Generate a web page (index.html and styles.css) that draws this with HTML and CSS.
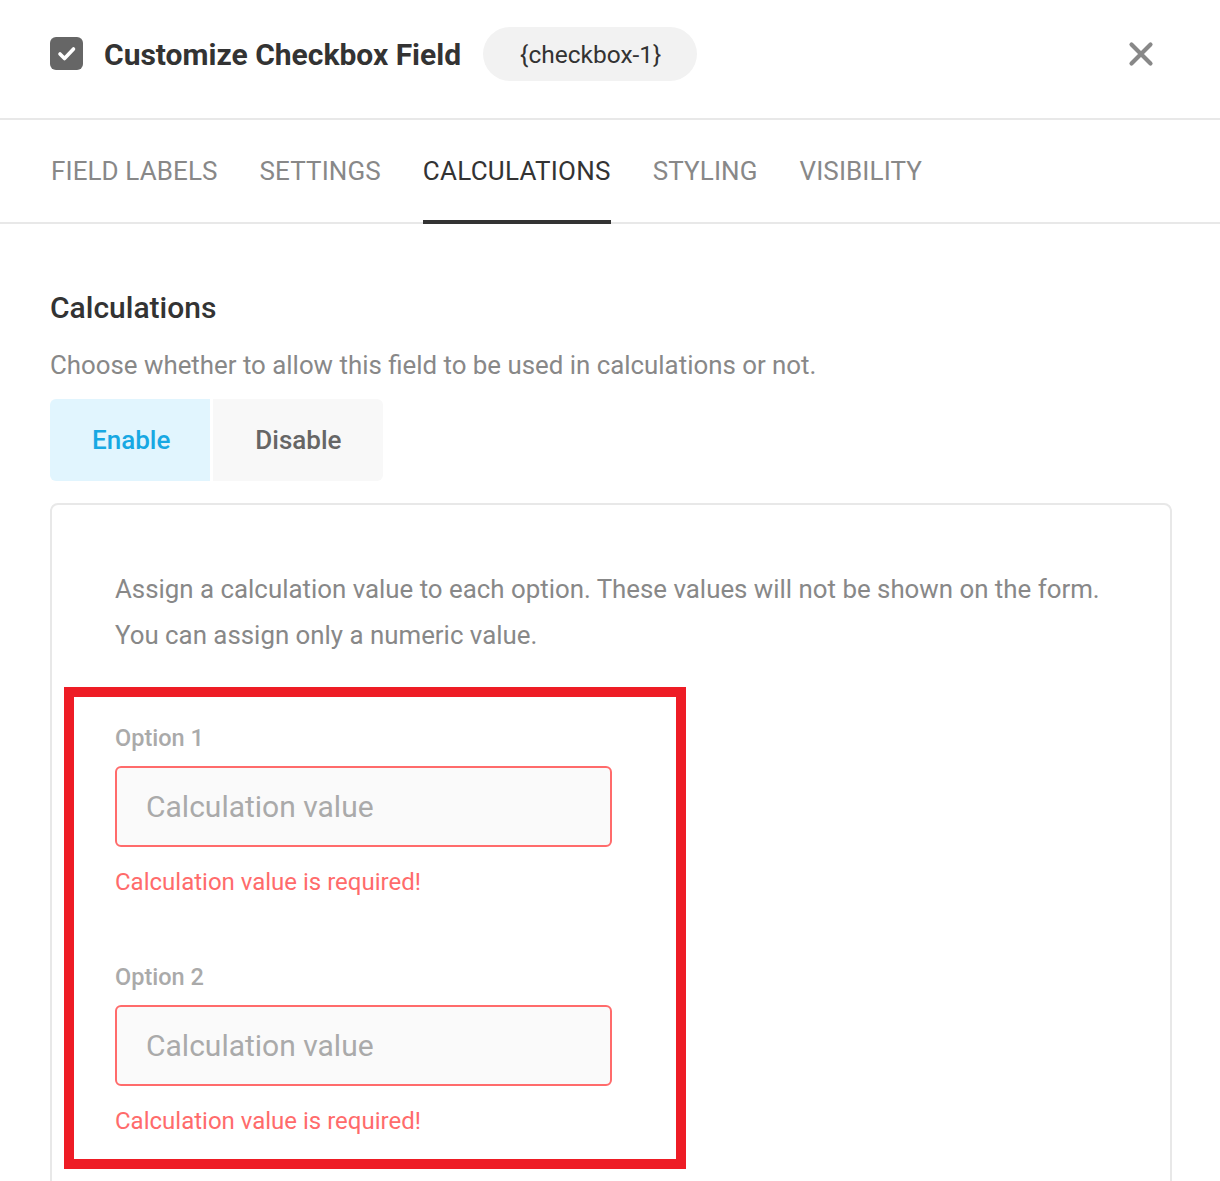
FILE: index.html
```html
<!DOCTYPE html>
<html lang="en">
<head>
<meta charset="utf-8">
<title>Customize Checkbox Field</title>
<link rel="stylesheet" href="styles.css">
</head>
<body>
<div class="modal">
  <header class="header">
    <span class="field-icon">
      <svg width="33" height="33" viewBox="0 0 33 33"><rect x="0" y="0" width="33" height="33" rx="6" fill="#666"/><path d="M10 17 L14.5 21.5 L23.5 12" fill="none" stroke="#fff" stroke-width="3.6" stroke-linecap="round" stroke-linejoin="round"/></svg>
    </span>
    <h1 class="title">Customize Checkbox Field</h1>
    <span class="tag">{checkbox-1}</span>
    <button class="close" aria-label="Close">
      <svg width="26" height="26" viewBox="0 0 26 26"><path d="M3.5 3.5 L22.5 22.5 M22.5 3.5 L3.5 22.5" stroke="#888" stroke-width="4.2" stroke-linecap="round"/></svg>
    </button>
  </header>
  <nav class="tabs">
    <span class="tab">FIELD LABELS</span>
    <span class="tab">SETTINGS</span>
    <span class="tab active">CALCULATIONS</span>
    <span class="tab">STYLING</span>
    <span class="tab">VISIBILITY</span>
  </nav>
  <main class="content">
    <h2 class="heading">Calculations</h2>
    <p class="desc">Choose whether to allow this field to be used in calculations or not.</p>
    <div class="toggle">
      <span class="toggle-btn on">Enable</span>
      <span class="toggle-btn off">Disable</span>
    </div>
    <section class="box">
      <p class="box-text">Assign a calculation value to each option. These values will not be shown on the form.<br>You can assign only a numeric value.</p>
      <div class="option">
        <label class="opt-label">Option 1</label>
        <input class="opt-input" type="text" placeholder="Calculation value">
        <div class="opt-error">Calculation value is required!</div>
      </div>
      <div class="option">
        <label class="opt-label">Option 2</label>
        <input class="opt-input" type="text" placeholder="Calculation value">
        <div class="opt-error">Calculation value is required!</div>
      </div>
    </section>
  </main>
  <div class="highlight"></div>
</div>
</body>
</html>
```
FILE: styles.css
```css
* { box-sizing: border-box; }
html, body { margin: 0; padding: 0; background: #fff; }
body {
  font-family: Roboto, "Liberation Sans", Arial, sans-serif;
  color: #333;
  overflow: hidden;
  height: 1181px;
}
.modal { position: relative; }

.header {
  display: flex;
  align-items: center;
  height: 120px;
  padding: 0 66px 10px 50px;
  border-bottom: 2px solid #e8e8e8;
}
.field-icon { display: flex; width: 33px; height: 33px; margin-top: -2px; }
.title {
  margin: 0 0 0 21px;
  font-size: 30px;
  font-weight: 700;
  color: #333;
  white-space: nowrap;
}
.tag {
  margin-left: 22px;
  height: 54px;
  padding: 0 36px 0 37px;
  border-radius: 27px;
  background: #f2f2f2;
  display: flex;
  align-items: center;
  font-size: 24.5px;
  color: #333;
}
.close {
  margin-left: auto;
  border: 0;
  background: none;
  padding: 0;
  display: flex;
  cursor: pointer;
}

.tabs {
  display: flex;
  gap: 42px;
  height: 104px;
  padding-left: 51px;
  border-bottom: 2px solid #e8e8e8;
}
.tab {
  display: flex;
  align-items: center;
  font-size: 26px;
  letter-spacing: 0.1px;
  color: #888;
  border-bottom: 4px solid transparent;
  margin-bottom: -2px;
  padding-top: 2px;
}
.tab.active { color: #333; border-bottom-color: #333; letter-spacing: 0.25px; }

.content { padding: 0 48px 0 50px; }
.heading {
  margin: 66px 0 0;
  font-size: 30px;
  line-height: 36px;
  font-weight: 500;
  color: #333;
}
.desc {
  margin: 23px 0 0;
  font-size: 25.85px;
  line-height: 32px;
  color: #888;
}
.toggle { display: flex; gap: 3px; margin-top: 18px; }
.toggle-btn {
  height: 82px;
  display: flex;
  align-items: center;
  font-size: 26px;
  font-weight: 500;
}
.toggle-btn.on {
  padding: 0 40px 0 42px;
  background: #e1f5fe;
  color: #17a8e3;
  border-radius: 6px 0 0 6px;
}
.toggle-btn.off {
  padding: 0 41px 0 42px;
  background: #f8f8f8;
  color: #666;
  border-radius: 0 6px 6px 0;
}

.box {
  margin-top: 22px;
  border: 2px solid #e8e8e8;
  border-radius: 8px;
  padding: 61px 40px 120px 63px;
}
.box-text {
  margin: 0;
  font-size: 25.85px;
  line-height: 46px;
  color: #888;
}
.option { display: flex; flex-direction: column; align-items: flex-start; }
.opt-label {
  margin-top: 65px;
  font-size: 23.5px;
  line-height: 30px;
  font-weight: 500;
  color: #aaa;
}
.opt-input {
  margin-top: 13px;
  width: 497px;
  height: 81px;
  border: 2px solid #ff6b6b;
  border-radius: 6px;
  background: #fafafa;
  padding: 0 20px 0 29px;
  font-family: inherit;
  font-size: 30px;
  color: #333;
  outline: none;
}
.opt-input::placeholder { color: #aaa; }
.opt-error {
  margin-top: 20px;
  font-size: 24px;
  line-height: 30px;
  color: #ff6b6b;
}

.highlight {
  position: absolute;
  left: 64px;
  top: 687px;
  width: 622px;
  height: 482px;
  border: 10px solid #ee1c25;
  pointer-events: none;
}
```
